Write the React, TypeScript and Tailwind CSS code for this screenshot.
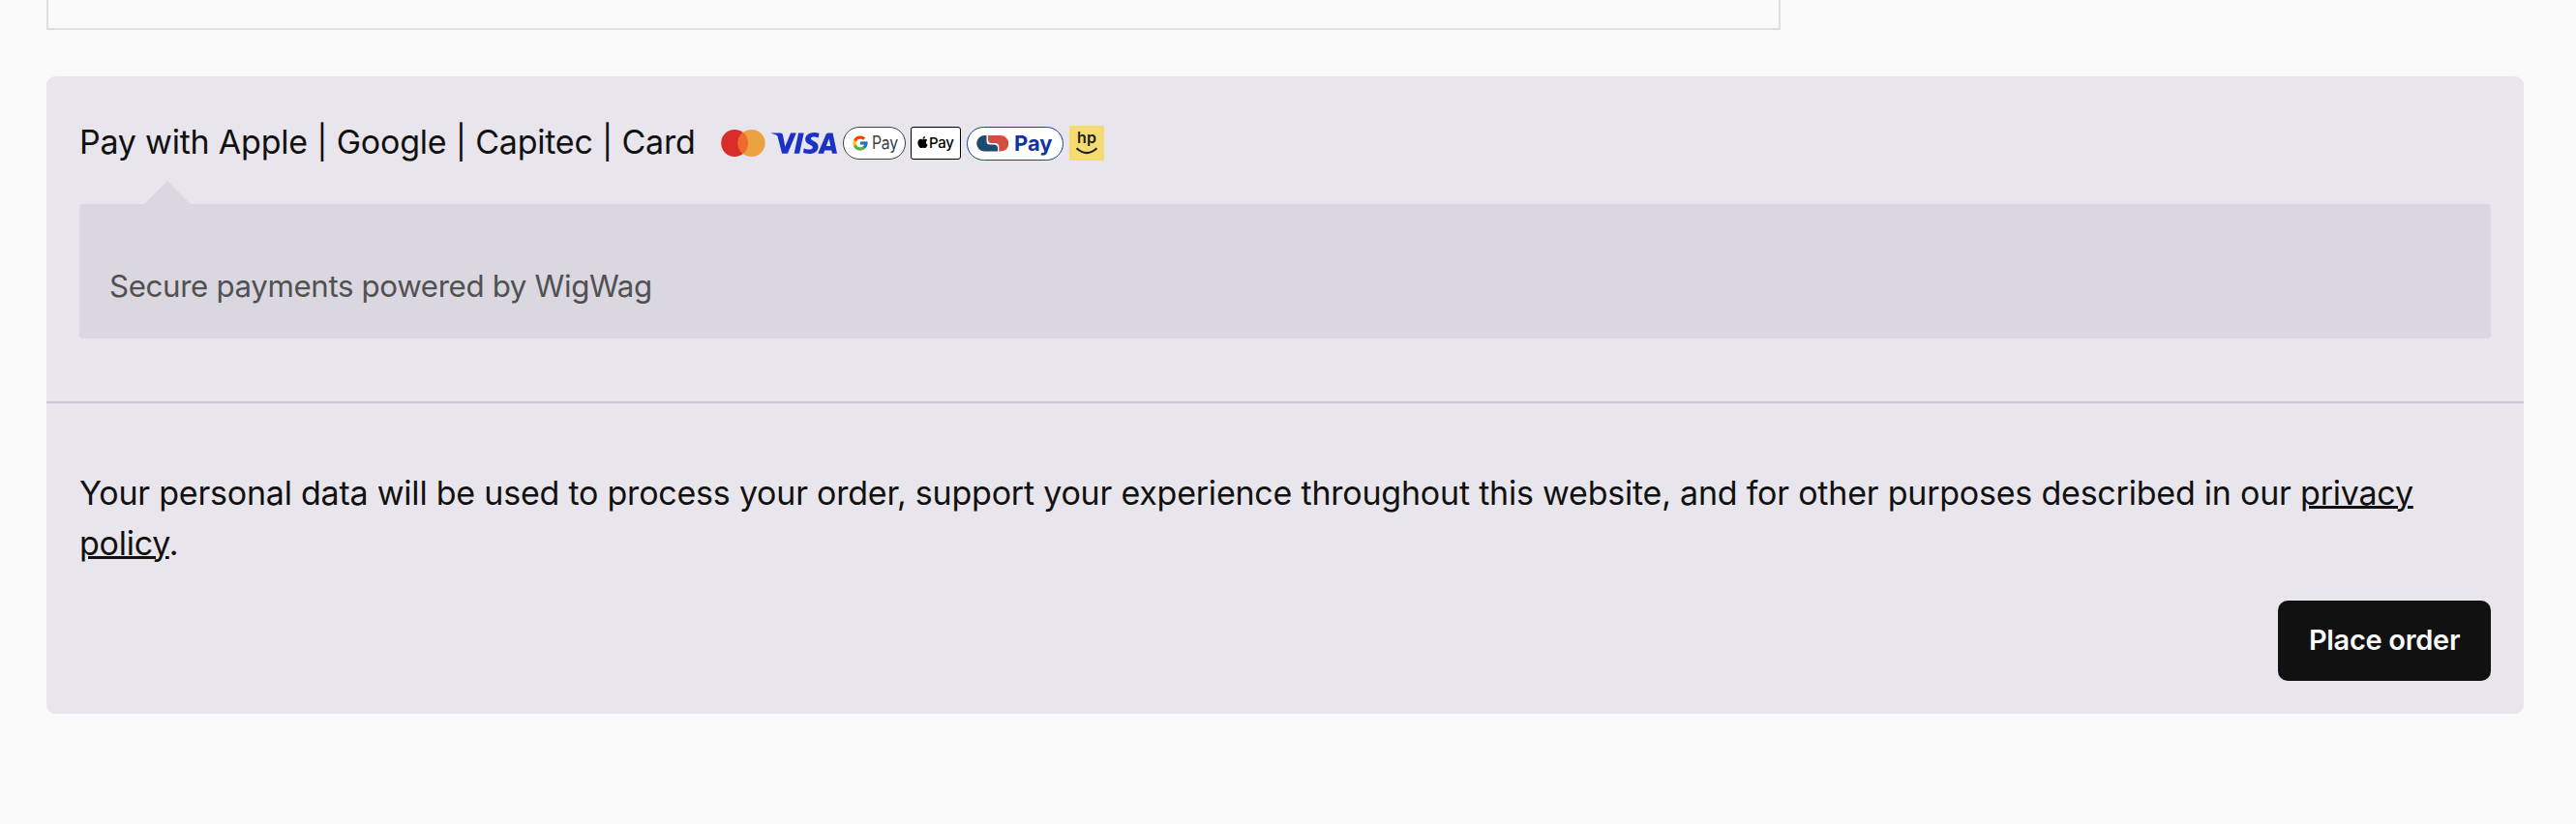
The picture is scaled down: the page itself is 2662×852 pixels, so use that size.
import { FcGoogle } from "react-icons/fc";
import { FaApple } from "react-icons/fa";
import { SiVisa } from "react-icons/si";

function Mastercard() {
  return (
    <svg className="h-7 w-[46px]" viewBox="0 0 46 28">
      <circle cx="14.2" cy="14" r="14" fill="#d92d2b" />
      <circle cx="31.6" cy="14" r="14" fill="#eba342" />
      <path d="M22.9 3a14 14 0 0 1 0 22a14 14 0 0 1 0-22z" fill="#f06a2b" />
    </svg>
  );
}

function CapitecMark() {
  return (
    <svg className="mt-[1px] h-[17px] w-[33px]" viewBox="0 0 33 17">
      <path d="M10.500 0H8.500A8.300 8.300 0 0 0 8.500 16.600H22V13Q22 9.500 18 9.500H14Q10.500 9.500 10.500 6z" fill="#1c4a70" />
      <path d="M12 0H25A8 8 0 0 1 25 16.600H23.300V12Q23.300 8 19 8H15.500Q12 8 12 4.500z" fill="#d64b43" />
    </svg>
  );
}

function PaymentIcons() {
  return (
    <div className="ml-[28px] flex h-9 items-center tracking-[-0.3px]">
      <Mastercard />
      <SiVisa className="ml-[6px] h-[68px] w-[68px] text-[#1a32c6]" />
      <span className="ml-[6px] flex h-[34px] w-[65px] items-center rounded-full border border-[#3c4043] bg-white pl-[8px]">
        <FcGoogle className="size-[18px]" />
        <span className="ml-[3px] inline-block origin-left scale-x-88 text-[18px] leading-none text-[#3c4043]">Pay</span>
      </span>
      <span className="ml-[5px] flex h-[34px] w-[52px] items-center rounded-[3px] border border-black bg-white pb-[2px] pl-[6px]">
        <FaApple className="h-[14px] w-[11px] text-black" />
        <span className="ml-[1px] text-[15px] leading-none font-medium text-black">Pay</span>
      </span>
      <span className="ml-[6px] flex h-[35px] w-[100px] items-center rounded-full border border-[#1c3f9c] bg-white pl-[9px]">
        <CapitecMark />
        <span className="ml-[6px] text-[22px] leading-none font-bold tracking-normal text-[#1433a0]">Pay</span>
      </span>
      <svg className="ml-[6px] size-9" viewBox="0 0 36 36">
        <rect width="36" height="36" fill="#f5dc72" />
        <text x="18" y="17.500" textAnchor="middle" fontSize="16" letterSpacing="0.1" fontWeight="600" fill="#1d1d1b">hp</text>
        <path d="M7.500 23.300Q18 33 28.500 23.300" fill="none" stroke="#1d1d1b" strokeWidth="2" />
      </svg>
    </div>
  );
}

export default function App() {
  return (
    <div className="flex h-[852px] w-[2662px] flex-col overflow-hidden bg-[#f9f9f9] px-[48px] font-['Inter',sans-serif] text-[34px] leading-[52px] tracking-[-0.22px] text-[#111111]">
      <div className="h-[31px] w-[1792px] shrink-0 border-x-2 border-b-2 border-[#dfdfdf]" />
      <section className="mt-[48px] w-[2560px] rounded-[9px] bg-[#e8e5ec]">
        <div className="h-[336px] px-[34px] pt-[43px]">
          <div className="flex h-[52px] items-center">
            <span className="w-[635px] pb-[2px] whitespace-nowrap">Pay with Apple | Google | Capitec | Card</span>
            <PaymentIcons />
          </div>
          <svg className="mt-[13px] ml-[67px] block h-6 w-12" viewBox="0 0 48 24">
            <path d="M0 24L24 0L48 24z" fill="#dad7e1" />
          </svg>
          <div className="h-[139px] rounded-[4px] bg-[#dad7e1] px-[31px] pt-[59px] text-[31.28px] tracking-[-0.36px] text-[#515151]">
            Secure payments powered by WigWag
          </div>
        </div>
        <div className="flex h-[323px] flex-col border-t-2 border-[#cdc9da] px-[34px] pt-[67px]">
          <p>
            Your personal data will be used to process your order, support your experience throughout this website, and
            for other purposes described in our{" "}
            <a href="#" className="underline decoration-[3px] underline-offset-[1px]">privacy policy</a>.
          </p>
          <button className="mt-[33px] h-[83px] w-[220px] self-end rounded-[10px] bg-[#111111] pb-[2px] text-[29px] font-semibold tracking-[-0.31px] text-[#f9f9f9]">
            Place order
          </button>
        </div>
      </section>
    </div>
  );
}
